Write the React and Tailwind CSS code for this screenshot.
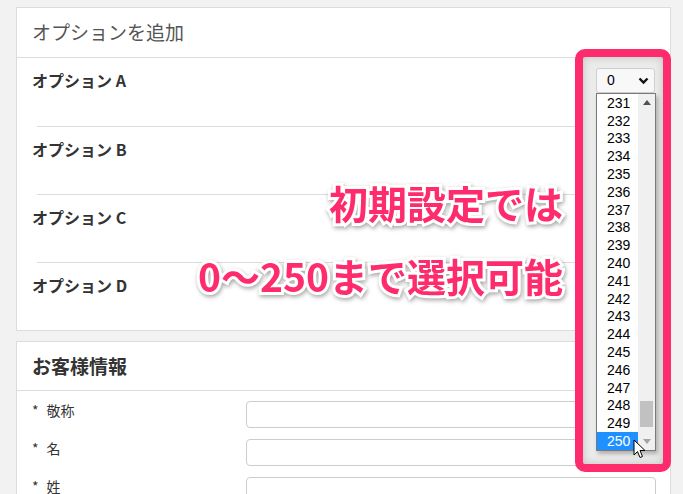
import React from 'react'

const FONT = "font-['Noto_Sans_CJK_JP','Noto_Sans',sans-serif]"

const options = ['オプション A', 'オプション B', 'オプション C', 'オプション D']
const fields = ['敬称', '名', '姓']
const numbers = Array.from({ length: 20 }, (_, i) => 231 + i)

const Callout = ({ children, className }) => (
  <div
    className={`absolute text-[39px] leading-none font-bold text-[#fe2c6c] whitespace-nowrap [-webkit-text-stroke:6px_white] [paint-order:stroke_fill] drop-shadow-[1px_2px_2px_rgba(0,0,0,0.35)] ${className}`}
  >
    {children}
  </div>
)

const Dropdown = () => (
  <div className="absolute left-[575px] top-[49px] w-[96px] h-[423px] rounded-[10px] border-[8px] border-[#fe2c6c] bg-[#ebebeb] shadow-[inset_0_0_8px_rgba(0,0,0,0.18)]">
    <div className="ml-[13px] mt-[11px] w-[59px] h-[25px] rounded-[3px] border border-[#cfcfcf] bg-[#f8f8f8] flex items-center justify-between pl-[10px] pr-[5px] font-['Liberation_Sans',sans-serif] text-[14px] text-black">
      <span>0</span>
      <svg width="11" height="8" viewBox="0 0 11 8">
        <path d="M1.5 1.5 L5.5 5.5 L9.5 1.5" fill="none" stroke="#111" strokeWidth="2.4" />
      </svg>
    </div>
    <div className="ml-[13px] w-[60px] h-[358px] border border-[#7a7a7a] bg-white flex shadow-[2px_3px_4px_rgba(0,0,0,0.25)]">
      <div className="flex-1 flex flex-col font-['Liberation_Sans',sans-serif] text-[14px] leading-none">
        {numbers.map((n) => (
          <div
            key={n}
            className={`h-[17.8px] flex items-center pl-[10px] ${n === 250 ? 'bg-[#1e90ff] text-white' : 'text-black'}`}
          >
            {n}
          </div>
        ))}
      </div>
      <div className="w-[17px] bg-[#f0f0f0] flex flex-col items-center">
        <div className="h-[17px] flex items-center justify-center">
          <svg width="8" height="5" viewBox="0 0 8 5"><path d="M0 5 L4 0 L8 5 Z" fill="#505050" /></svg>
        </div>
        <div className="flex-1" />
        <div className="w-[13px] h-[26px] bg-[#c1c1c1] mb-[6px]" />
        <div className="h-[17px] flex items-center justify-center">
          <svg width="8" height="5" viewBox="0 0 8 5"><path d="M0 0 L4 5 L8 0 Z" fill="#a3a3a3" /></svg>
        </div>
      </div>
    </div>
    <svg className="absolute left-[50px] top-[382px]" width="14" height="20" viewBox="0 0 14 20">
      <path d="M1 1 L1 16 L4.5 12.5 L7 18.5 L9.5 17.5 L7 11.5 L12 11.5 Z" fill="white" stroke="black" strokeWidth="1" strokeLinejoin="round" />
    </svg>
  </div>
)

const App = () => {
  return (
    <div className={`relative w-[683px] h-[494px] overflow-hidden bg-[#f2f2f2] pl-[16px] pr-[12px] pt-[7px] ${FONT}`}>
      <div className="bg-white border border-[#dcdcdc]">
        <div className="h-[50px] border-b border-[#dcdcdc] flex items-center px-[15px] text-[19px] text-[#555]">
          オプションを追加
        </div>
        {options.map((label, i) => (
          <div key={label} className="h-[68px] flex flex-col">
            {i > 0 && <div className="ml-[20px] mr-[15px] border-t border-[#dcdcdc]" />}
            <div className="px-[15px] pt-[10px] text-[16px] font-bold text-[#333]">{label}</div>
          </div>
        ))}
      </div>

      <div className="mt-[10px] bg-white border border-[#dcdcdc] h-[200px]">
        <div className="h-[49px] border-b border-[#dcdcdc] flex items-center px-[15px] text-[19px] font-bold text-[#333]">
          お客様情報
        </div>
        <div className="flex flex-col gap-[11px] pt-[10px]">
          {fields.map((f) => (
            <div key={f} className="flex items-start">
              <div className="w-[229px] pl-[15px] -mt-[1px] leading-[20px] text-[14px] text-[#333] flex gap-[8px]">
                <span>*</span>
                <span>{f}</span>
              </div>
              <div className="w-[410px] h-[27px] rounded-[4px] border border-[#cccccc] bg-white" />
            </div>
          ))}
        </div>
      </div>

      <Callout className="right-[120px] top-[183px]">初期設定では</Callout>
      <Callout className="right-[120px] top-[256px]">0〜250まで選択可能</Callout>

      <Dropdown />
    </div>
  )
}

export default App
